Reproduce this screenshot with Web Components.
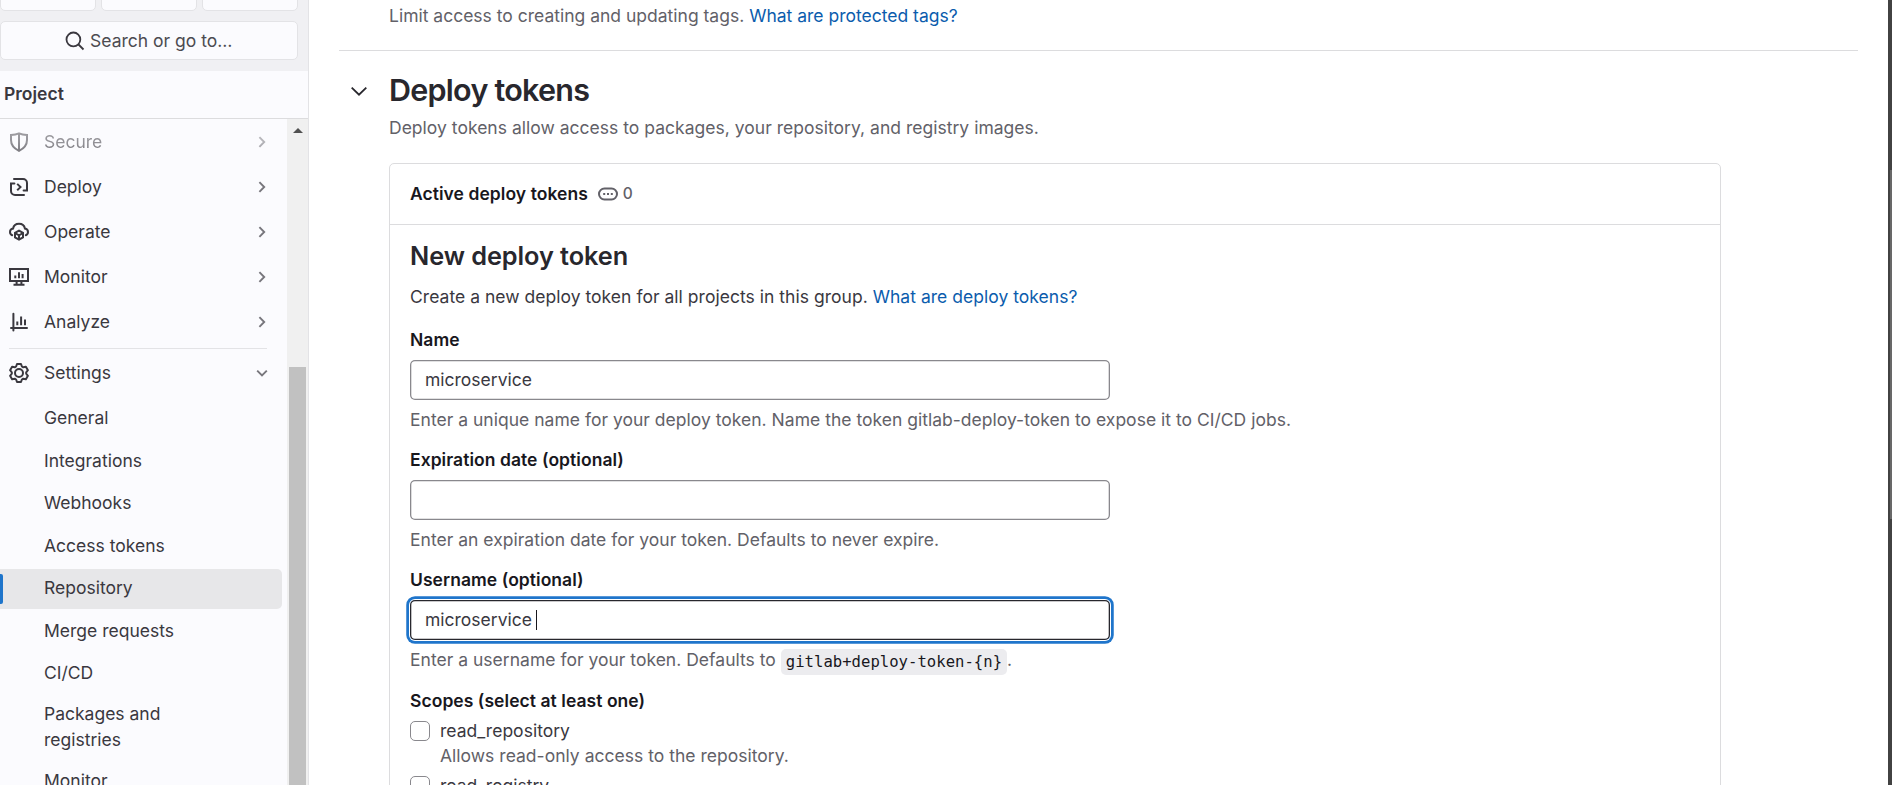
<!DOCTYPE html>
<html lang="en">
<head>
<meta charset="utf-8">
<title>Repository settings</title>
<style>
html,body{margin:0;height:100%;overflow:hidden;background:#fff}
body{font:400 17.5px/25px Inter,"Liberation Sans",sans-serif;color:#3a383f}
</style>
</head>
<body>
<gl-app></gl-app>
<script>
const define = (name, html) => {
  const t = document.createElement('template');
  t.innerHTML = html;
  customElements.define(name, class extends HTMLElement {
    constructor() {
      super();
      this.attachShadow({mode: 'open'}).append(t.content.cloneNode(true));
    }
    connectedCallback() {
      const glyph = this.shadowRoot.querySelector('[data-glyph]');
      if (glyph) glyph.innerHTML = ICONS[this.getAttribute('name')] || '';
    }
  });
};

/* Stroke icons on a 20 unit grid */
const ICONS = {
  search: '<circle cx="8.4" cy="8.4" r="6.9"/><path d="M13.5 13.5l5 5"/>',
  shield: '<path d="M10 1.3c2.3 1 4.8 1.5 8 1.6V8c0 5-2.7 8.3-8 10.9C4.700 16.300 2 13 2 8V2.900C5.200 2.800 7.700 2.300 10 1.300z"/><path d="M10 1.300v17.600"/>',
  deploy: '<path d="M5 2h9a4 4 0 0 1 4 4v7.400h-3.400M15 18H6a4 4 0 0 1-4-4V6.600h3.400" stroke-linecap="round"/><path d="M8.200 6.900l3.300 3.200-3.300 3.200"/>',
  operate: '<path d="M3.200 13.200C1.700 12.600 1 11.400 1 10c0-1.800 1.200-3.200 3.100-3.500C4.600 3.700 7 1.800 10 1.800s5.400 1.900 5.900 4.700C17.800 6.800 19 8.200 19 10c0 1.400-.7 2.600-2.200 3.200" stroke-linecap="round"/><path d="M10 8.700l4 2.200v4.500l-4 2.300-4-2.300v-4.500zM6 11l4 2.300 4-2.300M10 13.300v4.400"/>',
  monitor: '<path d="M1 2h18v12H1zM7.600 14v3M12.400 14v3M4.500 17.700h11M6.300 8.500v2.700M10 5.200v6M13.600 7v4.200"/>',
  analyze: '<path d="M4.400 1.700v16.800M2 16h16" stroke-linecap="round"/><path d="M8.300 9.500v3.700M12.100 4.500v8.700M16 7.400v5.800"/>',
  settings: '<circle cx="10" cy="10" r="4"/><path stroke-linejoin="round" d="M8 1h4l.9 2.500 1.300.8 2.700-.5 2 3.400-1.700 2.100v1.400l1.700 2.100-2 3.400-2.700-.5-1.300.8L12 19H8l-.9-2.500-1.300-.8-2.700.5-2-3.400 1.700-2.100V9.300L1.100 7.200l2-3.400 2.700.5 1.300-.8z"/>',
  right: '<path d="M7.400 5.200l4.800 4.800-4.800 4.800"/>',
  down: '<path d="M5.200 7.600l4.800 4.800 4.800-4.800"/>',
  expand: '<path d="M2.700 6.600l7.300 7.100 7.300-7.100"/>',
  token: '<rect x="1" y="4.500" width="18" height="11" rx="5.500"/><path d="M5.200 10h2M9 10h2M12.800 10h2"/>'
};

define('gl-icon', `<style>
:host{display:block;width:20px;height:20px;flex:none}
svg{display:block;width:100%;height:100%;fill:none;stroke:currentColor;stroke-width:var(--sw,2)}
</style><svg viewBox="0 0 20 20" data-glyph aria-hidden="true"></svg>`);

define('gl-tile', `<style>:host{display:block;box-sizing:border-box;height:30px;width:95.500px;background:#fbfbfe;border:1px solid #e3e3e6;border-radius:5px}</style>`);

define('gl-search', `<style>
:host{display:flex;align-items:center;justify-content:center;gap:5px;box-sizing:border-box;height:39px;width:297.500px;background:#fbfbfe;border:1px solid #e3e3e6;border-radius:5px;color:#4c4b51}
gl-icon{width:20px;height:20px;color:#3a383f;--sw:1.8}
</style><gl-icon name="search"></gl-icon><span><slot></slot></span>`);

define('gl-nav-item', `<style>
:host{display:flex;align-items:center;height:45px;padding:0 16px 0 9px;color:#3a383f}
span{flex:1;padding-left:15px}
:host([faded]){-webkit-mask-image:linear-gradient(#0006,#0008 50%,#000c);mask-image:linear-gradient(#0006,#0008 50%,#000c)}
</style><slot name="icon"></slot><span><slot></slot></span><slot name="chevron"></slot>`);

define('gl-sub-item', `<style>
:host{display:block;padding:1.250px 5px 1.250px 0}
div{position:relative;box-sizing:border-box;min-height:40px;padding:6.400px 60px 8.600px 44px;border-radius:0 5px 5px 0;color:#3a383f;line-height:25px}
:host([wrap]) div{padding-right:90px;padding-top:5px;padding-bottom:6px;line-height:26px}
:host([active]) div{background:#e7e7e9}
:host([active]) div::before{content:"";position:absolute;left:0;top:5px;width:3px;height:30px;background:#1f75cb;border-radius:0 2px 2px 0}
</style><div><slot></slot></div>`);

define('gl-scrollbar', `<style>
:host{display:flex;flex-direction:column;align-items:center;width:21px;background:#f0f0f0}
i{margin-top:9px;border:5px solid transparent;border-top:0;border-bottom:5px solid #505050}
b{margin-top:234px;width:17px;flex:1;background:#c1c1c1}
</style><i></i><b></b>`);

define('gl-sidebar', `<style>
:host{display:flex;flex-direction:column;box-sizing:border-box;width:309px;height:785px;background:#fbfbfe;border-right:1px solid #e3e3e6;overflow:hidden}
header{height:71px;background:#f0f0f3;flex:none;display:flex;flex-direction:column;gap:10px}
.tiles{display:flex;gap:5.500px;height:11px;align-items:flex-end}
h2{margin:0;flex:none;height:47px;padding-left:4px;font-size:17.500px;font-weight:600;line-height:45px;border-bottom:1px solid #dcdcde;color:#3a383f}
.body{display:flex;flex:1;min-height:0}
nav{flex:1;overflow:hidden}
hr{border:0;border-top:1px solid #e3e3e6;margin:4px 20px 1px 9px}
.c{color:#77767c;--sw:1.900;margin-right:-1px}
.sub{padding-top:2.500px}
</style>
<header><div class="tiles"><gl-tile></gl-tile><gl-tile></gl-tile><gl-tile></gl-tile></div><gl-search>Search or go to…</gl-search></header>
<h2>Project</h2>
<div class="body"><nav>
<gl-nav-item faded><gl-icon slot="icon" name="shield"></gl-icon>Secure<gl-icon slot="chevron" class="c" name="right"></gl-icon></gl-nav-item>
<gl-nav-item><gl-icon slot="icon" name="deploy"></gl-icon>Deploy<gl-icon slot="chevron" class="c" name="right"></gl-icon></gl-nav-item>
<gl-nav-item><gl-icon slot="icon" name="operate"></gl-icon>Operate<gl-icon slot="chevron" class="c" name="right"></gl-icon></gl-nav-item>
<gl-nav-item><gl-icon slot="icon" name="monitor"></gl-icon>Monitor<gl-icon slot="chevron" class="c" name="right"></gl-icon></gl-nav-item>
<gl-nav-item><gl-icon slot="icon" name="analyze"></gl-icon>Analyze<gl-icon slot="chevron" class="c" name="right"></gl-icon></gl-nav-item>
<hr>
<gl-nav-item><gl-icon slot="icon" name="settings"></gl-icon>Settings<gl-icon slot="chevron" class="c" name="down"></gl-icon></gl-nav-item>
<div class="sub">
<gl-sub-item>General</gl-sub-item>
<gl-sub-item>Integrations</gl-sub-item>
<gl-sub-item>Webhooks</gl-sub-item>
<gl-sub-item>Access tokens</gl-sub-item>
<gl-sub-item active>Repository</gl-sub-item>
<gl-sub-item>Merge requests</gl-sub-item>
<gl-sub-item>CI/CD</gl-sub-item>
<gl-sub-item wrap>Packages and registries</gl-sub-item>
<gl-sub-item>Monitor</gl-sub-item>
</div>
</nav><gl-scrollbar></gl-scrollbar></div>`);

define('gl-link', `<style>:host{color:#0b5cad}</style><slot></slot>`);

define('gl-code', `<style>:host{display:inline-block;height:26px;line-height:26px;padding:0 5px;border-radius:5px;background:#ececef;color:#18171d;font-family:"DejaVu Sans Mono","Liberation Mono",monospace;font-size:15.600px;vertical-align:-1px}</style><slot></slot>`);

define('gl-field', `<style>
:host{display:block;height:120px}
label{display:block;height:33px;font-weight:600;color:#18171d;letter-spacing:.05px}
.box{box-sizing:border-box;display:flex;align-items:center;width:700px;height:40px;border-radius:5px;padding:0 15px 2px;box-shadow:inset 0 0 0 1.300px #89888d}
:host([focused]) .box{box-shadow:inset 0 0 0 1.300px #28272d,0 0 0 1px #fff,0 0 0 3.750px #1f75cb}
.caret{display:none;width:1px;height:20px;background:#18171d;margin:1px 0 0 4px}
:host([focused]) .caret{display:block}
.help{height:27px;padding-top:7px;color:#626168;white-space:nowrap;letter-spacing:.015px}
</style><label><slot name="label"></slot></label>
<div class="box"><slot></slot><i class="caret"></i></div>
<div class="help"><slot name="help"></slot></div>`);

define('gl-check', `<style>
:host{display:flex;gap:10px;height:55px}
i{box-sizing:border-box;width:20px;height:20px;border:1.250px solid #89888d;border-radius:5px;flex:none;margin-top:2px}
div{margin-top:-1px;letter-spacing:.015px}
small{display:block;font-size:17.500px;color:#626168}
</style><i></i><div><slot></slot><small><slot name="help"></slot></small></div>`);

define('gl-card', `<style>
:host{display:block;box-sizing:border-box;width:1332px;height:700px;border:1px solid #dcdcde;border-radius:5px}
header{display:flex;align-items:center;box-sizing:border-box;height:61px;padding:0 20px 1px;border-bottom:1px solid #dcdcde;font-weight:600;color:#18171d;letter-spacing:.05px}
section{padding:0 20px}
</style><header><slot name="header"></slot></header><section><slot></slot></section>`);

define('gl-main', `<style>
:host{display:block;flex:1;height:785px;overflow:hidden;padding-left:30px}
.prev{height:47px;padding:3px 0 0 50px;color:#626168}
hr{border:0;border-top:1px solid #dcdcde;width:1519px;margin:0}
.head{display:flex;align-items:center;height:40px;margin-top:19px;padding-left:10px}
.head gl-icon{color:#28272d;--sw:1.800;margin-top:2px}
h1{margin:0 0 0 20px;font-size:30.500px;line-height:40px;font-weight:600;letter-spacing:-.740px;color:#28272d}
.desc{padding:5px 0 23px 50px;color:#626168;letter-spacing:.018px}
gl-card{margin-left:50px}
.count{display:flex;align-items:center;gap:5px;margin-left:10px;color:#626168;font-size:15.500px;font-weight:500}
h2{margin:0;padding-top:15px;font-size:25.300px;line-height:32px;font-weight:600;letter-spacing:-.060px;color:#28272d}
p{margin:0;padding:12px 0 18px;letter-spacing:.028px}
.scopes{font-weight:600;color:#18171d;margin-top:1px;height:31px;letter-spacing:.05px}
</style>
<div class="prev">Limit access to creating and updating tags. <gl-link>What are protected tags?</gl-link></div>
<hr>
<div class="head"><gl-icon name="expand"></gl-icon><h1>Deploy tokens</h1></div>
<div class="desc">Deploy tokens allow access to packages, your repository, and registry images.</div>
<gl-card>
<span slot="header">Active deploy tokens</span><span slot="header" class="count"><gl-icon name="token"></gl-icon>0</span>
<h2>New deploy token</h2>
<p>Create a new deploy token for all projects in this group. <gl-link>What are deploy tokens?</gl-link></p>
<gl-field><span slot="label">Name</span>microservice<span slot="help">Enter a unique name for your deploy token. Name the token gitlab-deploy-token to expose it to CI/CD jobs.</span></gl-field>
<gl-field><span slot="label">Expiration date (optional)</span><span slot="help">Enter an expiration date for your token. Defaults to never expire.</span></gl-field>
<gl-field focused><span slot="label">Username (optional)</span>microservice<span slot="help">Enter a username for your token. Defaults to <gl-code>gitlab+deploy-token-{n}</gl-code>.</span></gl-field>
<div class="scopes">Scopes (select at least one)</div>
<gl-check>read_repository<span slot="help">Allows read-only access to the repository.</span></gl-check>
<gl-check>read_registry</gl-check>
</gl-card>`);

define('gl-page-scroll', `<style>
:host{display:flex;justify-content:flex-end;width:4px;height:785px;background:#424242}
i{width:2px;height:349px;margin-top:170px;background:#686868}
</style><i></i>`);

define('gl-app', `<style>:host{display:flex;width:1892px;height:785px;overflow:hidden}gl-sidebar,gl-page-scroll{flex:none}</style>
<gl-sidebar></gl-sidebar><gl-main></gl-main><gl-page-scroll></gl-page-scroll>`);
</script>
</body>
</html>
